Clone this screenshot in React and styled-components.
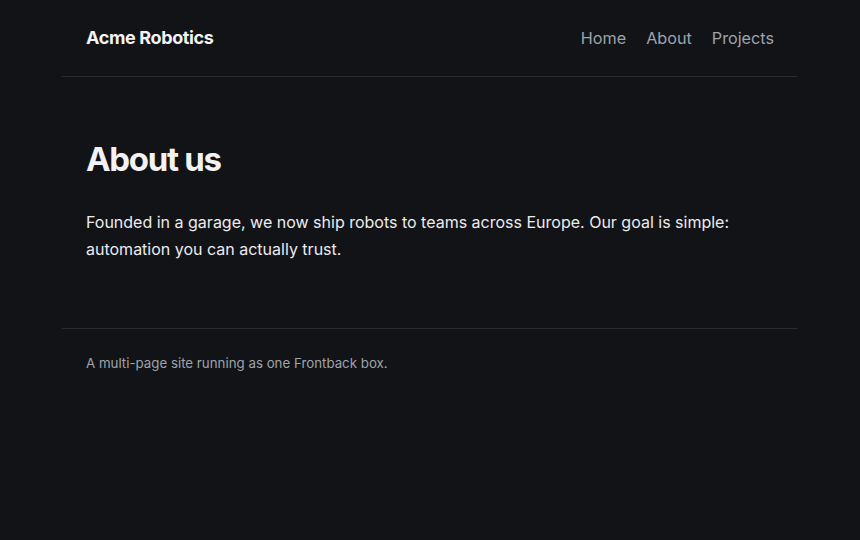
import React from "react";
import styled, { createGlobalStyle } from "styled-components";

const Global = createGlobalStyle`
  html, body { margin: 0; padding: 0; background: #121317; }
  body { font-family: Inter, "Noto Sans", sans-serif; color: #e8e8ea; -webkit-font-smoothing: antialiased; }
`;

const Shell = styled.div`
  max-width: 736px;
  margin: 0 auto;
`;

const Header = styled.header`
  display: flex;
  align-items: center;
  justify-content: space-between;
  height: 77px;
  padding: 0 24px 1px;
  border-bottom: 1px solid #2a2b30;
  box-sizing: border-box;
`;

const Logo = styled.div`
  font-size: 18px;
  font-weight: 700;
  color: #f2f2f4;
  letter-spacing: -0.02em;
`;

const Nav = styled.nav`
  display: flex;
  gap: 20px;
`;

const NavLink = styled.a`
  font-size: 16.2px;
  color: #9ea3ad;
  text-decoration: none;
`;

const Main = styled.main`
  padding: 60px 24px 65px;
  border-bottom: 1px solid #2a2b30;
`;

const Title = styled.h1`
  margin: 0 0 28px;
  font-size: 33px;
  font-weight: 700;
  letter-spacing: -0.04em;
  line-height: 44px;
  color: #f2f2f4;
`;

const Para = styled.p`
  margin: 0;
  font-size: 16px;
  line-height: 27px;
  color: #ececee;
`;

const Footer = styled.footer`
  padding: 26px 24px;
  font-size: 13.3px;
  color: #9ea3ad;
`;

export default function App() {
  return (
    <>
      <Global />
      <Shell>
        <Header>
          <Logo>Acme Robotics</Logo>
          <Nav>
            <NavLink href="#">Home</NavLink>
            <NavLink href="#">About</NavLink>
            <NavLink href="#">Projects</NavLink>
          </Nav>
        </Header>
        <Main>
          <Title>About us</Title>
          <Para>
            Founded in a garage, we now ship robots to teams across Europe. Our goal is simple:
            automation you can actually trust.
          </Para>
        </Main>
        <Footer>A multi-page site running as one Frontback box.</Footer>
      </Shell>
    </>
  );
}
